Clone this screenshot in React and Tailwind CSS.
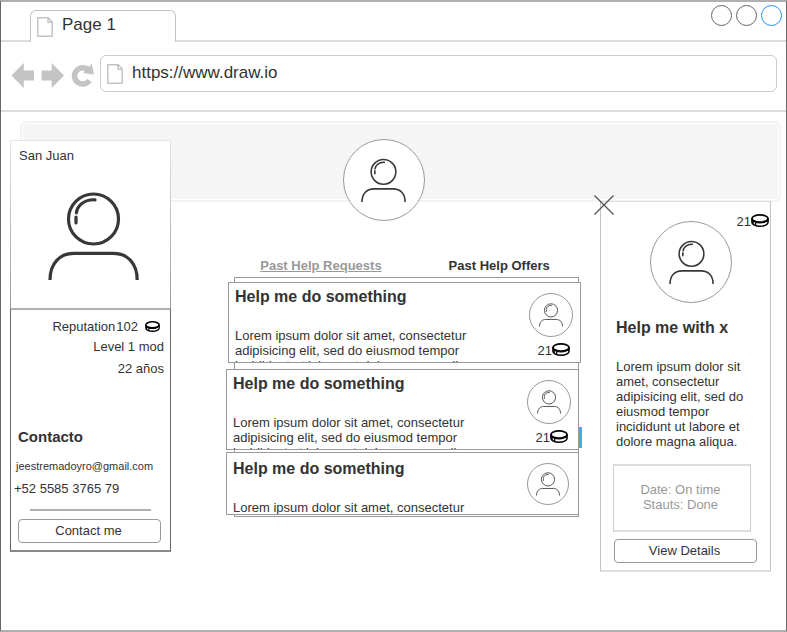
const LOREM =
  "Lorem ipsum dolor sit amet, consectetur adipisicing elit, sed do eiusmod tempor incididunt ut labore et dolore magna aliqua.";

function PersonIcon({ className }) {
  return (
    <svg viewBox="48 192 91 89" fill="none" stroke="#383838" strokeWidth="3.2" className={className} aria-hidden="true">
      <circle cx="93.5" cy="220" r="25" />
      <path strokeLinecap="round" d="M95 200.8c-10.500-.6-17.600 5.500-18.600 13M76 218v6" />
      <path d="M50 281c0-17 10-26.600 24-26.600h39.300c14 0 23.900 9.600 23.900 26.600" />
    </svg>
  );
}

function Avatar({ className, iconClass }) {
  return (
    <div className={`flex shrink-0 items-center justify-center rounded-full border border-[#999] bg-white ${className}`}>
      <PersonIcon className={iconClass} />
    </div>
  );
}

function Puck({ className }) {
  return (
    <svg viewBox="0 0 18 13" fill="none" stroke="#000" className={className} aria-hidden="true">
      <path d="M1 4.500v4c0 2 3.500 3.700 8 3.700s8-1.700 8-3.700v-4" fill="#fff" strokeWidth="1.600" />
      <ellipse cx="9" cy="4.500" rx="8" ry="3.600" fill="#fff" strokeWidth="1.800" />
      <path d="M1 5.500c1.500 2.400 4.200 3.400 8 3.400s6.500-1 8-3.400" strokeWidth="1.400" />
      <path d="M4.600 8.500v3M2 7v3" strokeWidth="1.400" />
    </svg>
  );
}

function PageIcon({ className }) {
  return (
    <svg viewBox="0 0 16 20" fill="none" stroke="#c4c4c4" strokeWidth="1.500" className={className} aria-hidden="true">
      <path d="M.8.8h10.400l4 4v14.400H.8zM11 .8v4.400h4.200" />
    </svg>
  );
}

function Price({ className, children }) {
  return (
    <div className={`flex ${className}`}>
      <span>{children}</span>
      <Puck className="h-[13px] w-[18px]" />
    </div>
  );
}

function HelpCard({ className, avatar = "size-11", price }) {
  return (
    <article className={`flex justify-between overflow-hidden border border-[#999] bg-white pl-1.5 pr-[7px] ${className}`}>
      <div className="w-[260px]">
        <h3 className="text-base leading-[18px] font-bold">Help me do something</h3>
        <p className="mt-[22px]">{LOREM}</p>
      </div>
      <div className="flex flex-col items-end gap-1.5 pt-[5px]">
        <Avatar className={avatar} iconClass="w-6" />
        {price && <Price className="pr-[3px]">{price}</Price>}
      </div>
    </article>
  );
}

function PanelButton({ className, children }) {
  return (
    <button className={`h-6 w-[143px] rounded border border-[#999] bg-white pr-0.5 pb-0.5 ${className}`}>
      {children}
    </button>
  );
}

function Profile() {
  return (
    <aside className="mt-7 ml-[9px] w-[161px] shrink-0 self-start bg-white">
      <div className="flex h-[168px] flex-col border border-b-0 [border-image:linear-gradient(#e5e5e5,#999)_1] px-2 pt-[7px]">
        <p>San Juan</p>
        <PersonIcon className="mt-7 ml-[29px] w-[91px]" />
      </div>
      <div className="border-x border-t-2 border-b-2 border-x-[#666] border-t-[#b0b0b0] border-b-[#888] px-[7px] pt-[9px] pb-[7px]">
        <div className="flex items-center justify-end pr-[3px]">
          <span>Reputation</span>
          <span className="ml-px">102</span>
          <Puck className="ml-[7px] h-[11px] w-[15px]" />
        </div>
        <p className="-mr-px mt-[5px] text-right">Level 1 mod</p>
        <p className="-mr-px mt-[7px] text-right">22 años</p>
        <h2 className="mt-[52px] text-[15px] leading-[18px] font-bold">Contacto</h2>
        <p className="mt-[13px] -ml-0.5 text-[11px]">jeestremadoyro@gmail.com</p>
        <p className="mt-[7px] -ml-1">+52 5585 3765 79</p>
        <hr className="mx-3 mt-[13px] border-t-2 border-[#b0b0b0]" />
        <PanelButton className="mt-2">Contact me</PanelButton>
      </div>
    </aside>
  );
}

function History() {
  return (
    <section className="flex min-w-0 flex-1 flex-col items-center pt-[27px]">
      <Avatar className="mr-1 size-[82px]" iconClass="w-[45px]" />
      <nav className="mt-[37px] flex gap-[67px] pl-[39px] font-bold">
        <a href="#requests" className="text-[#999] underline">Past Help Requests</a>
        <a href="#offers">Past Help Offers</a>
      </nav>
      <div className="relative mt-1 ml-[42px] w-[345px] border border-[#999] bg-white pt-1 pb-px">
        <HelpCard className="-mr-[3px] -ml-[7px] h-[81px] pt-[5px]" price="21" />
        <HelpCard className="mt-1.5 -mr-px -ml-[9px] h-[81px] pt-[5px]" price="21" />
        <HelpCard className="mt-0.5 -mr-px -ml-[9px] h-[63px] pt-[7px]" avatar="size-[42px] -mt-0.5 mr-0.5" />
        <span className="absolute top-[149px] -right-1 h-[21px] w-[3px] bg-[#36b5e5]" />
      </div>
    </section>
  );
}

function Details() {
  return (
    <aside className="relative mt-[89px] mr-[15px] w-[171px] shrink-0 self-start border-x border-t border-b-2 border-x-[#c4c4c4] border-y-[#ddd] bg-white px-[13px] pb-[7px]">
      <button aria-label="Close" className="absolute -top-[7px] -left-[7px]">
        <svg viewBox="0 0 20 20" fill="none" stroke="#555" strokeWidth="1.300" className="size-5">
          <path d="M.5.5l19 19M19.500.5l-19 19" />
        </svg>
      </button>
      <Price className="-mr-3 justify-end pt-3">21</Price>
      <Avatar className="-mt-2 ml-9 size-[82px]" iconClass="w-[45px]" />
      <h2 className="mt-4 ml-0.5 text-base leading-[18px] font-bold">Help me with x</h2>
      <p className="mt-[22px] ml-0.5 w-[132px]">{LOREM}</p>
      <p className="mt-[15px] -ml-px flex h-[68px] w-[138px] flex-col justify-center border-x border-y-2 border-x-[#ccc] border-y-[#ddd] pr-[3px] pb-0.5 text-center text-[#999]">
        <span>Date: On time</span>
        <span>Stauts: Done</span>
      </p>
      <PanelButton className="mt-[7px]">View Details</PanelButton>
    </aside>
  );
}

export default function App() {
  return (
    <div className="flex min-h-screen flex-col border-x border-y-2 border-x-[#666] border-y-[#b0b0b0] bg-white font-['Liberation_Sans',Arial,sans-serif] text-[13px] leading-[15px] text-[#333]">
      <header>
        <div className="flex h-10 items-end">
          <div className="w-[29px] border-b-2 border-[#ddd]" />
          <div className="flex h-8 w-[146px] gap-[9px] rounded-t-md border border-b-0 border-[#c4c4c4] pt-1.5 pl-1.5">
            <PageIcon className="h-5 w-4" />
            <span className="text-[17px] leading-4">Page 1</span>
          </div>
          <div className="flex flex-1 items-start justify-end gap-1 self-stretch border-b-2 border-[#ddd] pt-[3px] pr-1">
            <button aria-label="Minimize" className="size-[21px] rounded-full border border-[#666]" />
            <button aria-label="Maximize" className="size-[21px] rounded-full border border-[#666]" />
            <button aria-label="Close window" className="size-[21px] rounded-full border border-[#1e90ff]" />
          </div>
        </div>
        <div className="flex h-[70px] items-start border-b-2 border-[#ddd] pt-[13px] pr-[9px] pl-2.5">
          <div className="flex gap-[7px] pt-2 pr-1.5">
            <button aria-label="Back">
              <svg viewBox="0 0 23 25" fill="#c4c4c4" className="h-[25px] w-[23px]"><path d="M.5 12.500L12.800 0v7.500H23v10H12.800V25z" /></svg>
            </button>
            <button aria-label="Forward">
              <svg viewBox="0 0 23 25" fill="#c4c4c4" className="h-[25px] w-[23px]"><path d="M23 12.500L10.700 0v7.500H.5v10h10.200V25z" /></svg>
            </button>
            <button aria-label="Reload">
              <svg viewBox="0 0 23 25" className="h-[25px] w-[23px]">
                <path d="M17.500 7A8.200 8.200 0 1 0 18.500 17.500" fill="none" stroke="#c4c4c4" strokeWidth="5.500" />
                <path d="M20.800.8l2.200 10.700-11-1.500z" fill="#c4c4c4" />
              </svg>
            </button>
          </div>
          <label className="flex h-[37px] min-w-0 flex-1 items-center gap-2 rounded-md border border-[#ccc] pl-[5px]">
            <PageIcon className="h-5 w-[18px]" />
            <input aria-label="Address" defaultValue="https://www.draw.io" className="mb-0.5 min-w-0 flex-1 text-[17px] leading-5 outline-none" />
          </label>
        </div>
      </header>
      <main className="grid">
        <div className="mt-[9px] mr-[5px] ml-[19px] h-[81px] rounded-md border-2 border-[#f3f3f3] bg-[#f5f5f5] shadow-[inset_0_0_0_1px_#fff] [grid-area:1/1]" />
        <div className="z-10 flex [grid-area:1/1]">
          <Profile />
          <History />
          <Details />
        </div>
      </main>
    </div>
  );
}
